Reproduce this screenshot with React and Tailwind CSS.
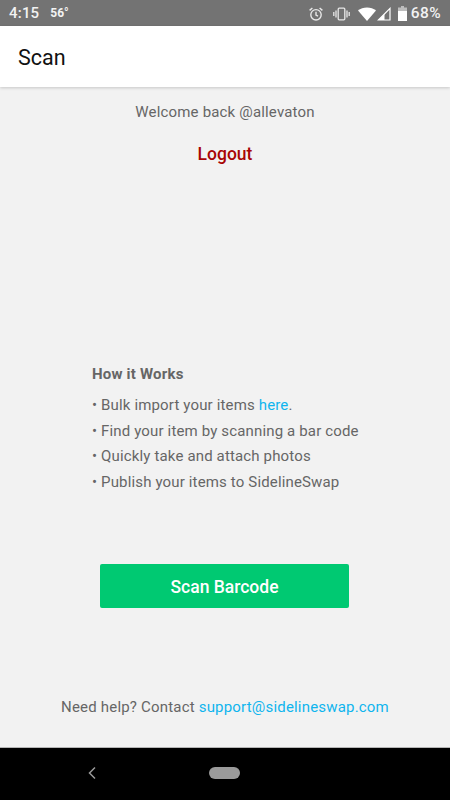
function StatusIcons() {
  return (
    <div className="flex items-center pt-[1px]">
      {/* alarm */}
      <svg width="16" height="16" viewBox="0 0 16 16" fill="none" stroke="#e8e8e8" strokeWidth="1.4" className="mr-[9px]">
        <circle cx="8" cy="8.8" r="5.2" />
        <path d="M8 5.8v3.2l2 1.2M1.6 4.4l2.8-2.4M14.4 4.4l-2.8-2.4" />
      </svg>
      {/* vibrate */}
      <svg width="17" height="14" viewBox="0 0 17 14" fill="none" stroke="#e8e8e8" strokeWidth="1.3" className="mr-[8px]">
        <rect x="5.2" y="1.2" width="6.6" height="11.6" rx="1" />
        <path d="M3 3.5v7M14 3.5v7M0.8 5v4M16.2 5v4" />
      </svg>
      {/* wifi */}
      <svg width="18" height="14" viewBox="0 0 18 14" className="mr-[1px]">
        <path d="M0 3.6C2.4 1.6 5.6 0.4 9 0.4s6.6 1.2 9 3.2L9 14z" fill="#ffffff" />
      </svg>
      {/* signal */}
      <svg width="14" height="14" viewBox="0 0 14 14" fill="none" className="mr-[7px]">
        <path d="M13 1.4V13H1.4z" stroke="#ffffff" strokeWidth="1.2" />
        <path d="M7.5 7V13H1.4z" fill="#ffffff" />
      </svg>
      {/* battery */}
      <svg width="9" height="15" viewBox="0 0 9 15" className="mr-[4px]">
        <path d="M3 0h3v1.4h3V15H0V1.4h3z" fill="#bdbdbd" />
        <path d="M0 5h9v10H0z" fill="#ffffff" />
      </svg>
      <span className="text-[15.5px] font-medium text-[#f2f2f2] tracking-[0.4px]">68%</span>
    </div>
  );
}

export default function App() {
  return (
    <div className="w-[450px] h-[800px] flex flex-col bg-[#f2f2f2] overflow-hidden font-['Roboto',sans-serif]">
      <div className="h-[26px] bg-[#737373] flex items-center justify-between pl-[9px] pr-[9px] shrink-0">
        <div className="flex items-center gap-[11px] text-white">
          <span className="text-[15px] font-medium text-[#f2f2f2] tracking-[0.2px]">4:15</span>
          <span className="text-[12px] font-bold text-[#f2f2f2]">56°</span>
        </div>
        <StatusIcons />
      </div>

      <div className="h-[61px] bg-white flex items-center pl-[18px] pt-[3px] shrink-0 shadow-[0_1px_3px_rgba(0,0,0,0.18)] relative">
        <span className="text-[21.5px] text-[#111111]">Scan</span>
      </div>

      <div className="flex-1 flex flex-col items-center">
        <p className="mt-[16px] text-[15px] leading-[18px] text-[#666666] tracking-[0.17px]">Welcome back @allevaton</p>
        <button className="mt-[23px] text-[17.5px] leading-[20px] font-medium text-[#a80505]">Logout</button>

        <div className="mt-[202px] w-full pl-[92px] text-[15px] text-[#666666] tracking-[0.15px]">
          <h2 className="font-bold leading-[16px] text-[15px] text-[#666666] tracking-[0.2px]">How it Works</h2>
          <ul className="mt-[10px] flex flex-col">
            <li className="h-[26px] leading-[26px]">• Bulk import your items <a className="text-[#0fb5ee]">here</a>.</li>
            <li className="h-[26px] leading-[26px]">• Find your item by scanning a bar code</li>
            <li className="h-[25px] leading-[25px]">• Quickly take and attach photos</li>
            <li className="h-[26px] leading-[26px]">• Publish your items to SidelineSwap</li>
          </ul>
        </div>

        <button className="mt-[69px] -ml-[1px] w-[249px] h-[44px] pt-[3px] rounded-[2px] bg-[#00c972] text-white text-[17.5px] font-medium">Scan Barcode</button>

        <p className="mt-[90px] text-[15px] leading-[18px] text-[#666666] tracking-[0.19px]">
          Need help? Contact <a className="text-[#0fb5ee]">support@sidelineswap.com</a>
        </p>
      </div>

      <div className="h-[53px] pb-[3px] bg-black relative flex items-center justify-center shrink-0 border-t border-[#b5b5b5]">
        <svg width="10" height="14" viewBox="0 0 10 14" fill="none" stroke="#9a9a9a" strokeWidth="1.5" className="absolute left-[87px] top-[18px]">
          <path d="M8 1.5L2.5 7L8 12.5" />
        </svg>
        <div className="w-[31px] h-[12px] -ml-[1px] rounded-full bg-[#9a9a9a]" />
      </div>
    </div>
  );
}
